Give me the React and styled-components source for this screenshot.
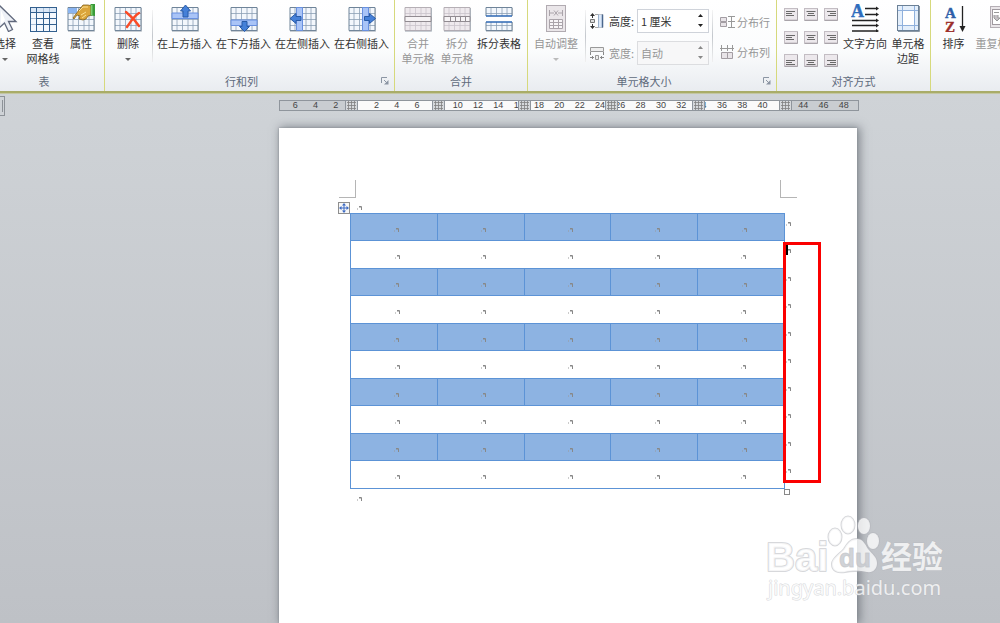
import React from "react"
import styled, { createGlobalStyle, css } from "styled-components"

const GlobalStyle = createGlobalStyle`
  * {
    box-sizing: border-box;
  }

  body {
    margin: 0;
    overflow: hidden;
    font-family: "Noto Sans CJK SC", "Liberation Sans", sans-serif;
    font-size: 11px;
    line-height: 15px;
    color: #333;
  }

  button, input {
    font: inherit;
    color: inherit;
    border: 0;
    padding: 0;
    margin: 0;
    background: none;
  }
`

const Window = styled.div`
  display: flex;
  flex-direction: column;
  height: 100vh;
  overflow: hidden;
`

/* ---------- ribbon ---------- */

const Ribbon = styled.header`
  display: flex;
  flex: none;
  height: 93px;
  overflow: hidden;
  background: linear-gradient(#ffffff, #fbfcfd 55%, #e9ecf0);
  border-bottom: 2px solid #a9ac68;
  box-shadow: 0 1px 0 #c3c6a2;
  z-index: 1;
`

const GroupBox = styled.section`
  display: flex;
  flex-direction: column;
  flex: ${(props) => (props.$last ? "1 0 auto" : "none")};
  width: ${(props) => props.$width || "auto"};
  margin-left: ${(props) => (props.$cut ? "-16px" : "0")};
  border-right: ${(props) => (props.$last ? "0" : "1px solid #d6d97c")};
`

const GroupBody = styled.div`
  display: flex;
  flex: 1;
  padding: 0 2px;
`

const GroupFooter = styled.div`
  display: flex;
  align-items: center;
  height: 20px;
  color: #5f6b7c;
`

const GroupTitle = styled.span`
  flex: 1;
  text-align: center;
`

const Launcher = styled.button`
  width: 16px;
  height: 12px;

  svg {
    display: block;
    margin-left: 3px;
  }
`

const Tool = styled.button`
  display: flex;
  flex-direction: column;
  align-items: center;
  flex: none;
  width: ${(props) => props.$width};
  padding-top: 4px;
  white-space: nowrap;
  color: ${(props) => (props.disabled ? "#969696" : "#333")};

  svg {
    flex: none;
  }
`

const ToolLabel = styled.span`
  margin-top: 4px;
  white-space: pre-line;
`

const Arrow = styled.i`
  width: 0;
  margin-top: 7px;
  border: 3px solid transparent;
  border-bottom: 0;
  border-top-color: ${(props) => (props.$off ? "#bbb" : "#666")};
`

const Divider = styled.i`
  flex: none;
  width: 1px;
  height: 52px;
  margin: 10px 2px 0 3px;
  background: linear-gradient(#f4f4f4, #c4c8cd 50%, #f0f0f0);
`

const Fields = styled.div`
  display: flex;
  flex-direction: column;
  gap: 8px;
  padding: 9px 0 0 2px;
`

const Field = styled.div`
  display: flex;
  align-items: center;
  height: 24px;
  color: ${(props) => (props.$off ? "#969696" : "#333")};

  label {
    width: 28px;
    margin-left: 5px;
  }
`

const Spin = styled.div`
  display: flex;
  align-items: center;
  width: 72px;
  height: 24px;
  border: 1px solid ${(props) => (props.$off ? "#dcdde0" : "#cfd3da")};
  background: ${(props) => (props.$off ? "#f7f7f8" : "#fff")};

  input {
    width: 54px;
    padding-left: 3px;
    outline: 0;
  }
`

const Steps = styled.div`
  display: flex;
  flex-direction: column;
  gap: 4px;
  width: 16px;
`

const Step = styled.button`
  display: flex;
  justify-content: center;
  height: 6px;
  padding-top: 1px;
`

const SmallTools = styled.div`
  display: flex;
  flex-direction: column;
  gap: 6px;
  padding: 10px 0 0 5px;
`

const SmallTool = styled.button`
  display: flex;
  align-items: center;
  gap: 2px;
  height: 24px;
  white-space: nowrap;
  color: #969696;
`

const AlignGrid = styled.div`
  display: grid;
  grid-template-columns: repeat(3, 14px);
  grid-auto-rows: 13px;
  gap: 10px 6px;
  padding: 8px 4px 0 5px;
`

const AlignButton = styled.button`
  display: block;

  svg {
    display: block;
  }
`

/* ---------- document ---------- */

const Workspace = styled.main`
  position: relative;
  display: flex;
  flex-direction: column;
  flex: 1;
  min-height: 0;
  background: linear-gradient(#cfd3d7, #bec1c6);
`

const RulerRow = styled.div`
  display: flex;
  flex: none;
  height: 35px;
`

const TabStop = styled.button`
  width: 5px;
  height: 20px;
  margin: 3px 274px 0 0;
  border: 1px solid #8d9298;
  border-left: 0;
  padding: 3px 1px 3px 0;

  i {
    display: block;
    height: 100%;
    border-right: 1px solid #8d9298;
  }
`

const Ruler = styled.div`
  position: relative;
  display: grid;
  grid-template-columns: repeat(28, minmax(0, 1fr));
  width: 580px;
  height: 11px;
  margin-top: 7px;
  padding: 0 4px 0 5px;
  border: 1px solid #8f959c;
  background: linear-gradient(to right, #c9cdd1 77px, #fafafa 77px, #fafafa 500px, #c9cdd1 500px);
  font-family: "Liberation Sans", sans-serif;
  font-size: 9px;
  line-height: 9px;
  text-align: center;
  color: #444;
`

const Marker = styled.i`
  position: absolute;
  top: 0;
  width: 13px;
  height: 9px;
  border: solid #8f959c;
  border-width: 0 1px;
  background: #d6d9dc;

  svg {
    display: block;
    margin-left: 1px;
  }
`

const Sheet = styled.article`
  flex: 1;
  width: 578px;
  margin-left: 279px;
  padding: 52px 60px 0;
  background: #fff;
  box-shadow: 0 0 2px #868b92, 2px 0 9px 1px rgba(80, 86, 95, 0.6);
`

const Corners = styled.div`
  display: flex;
  justify-content: space-between;
`

const Corner = styled.i`
  width: 17px;
  height: 18px;
  border-bottom: 1px solid #b5b5b5;
  ${(props) =>
    props.$right
      ? css`border-left: 1px solid #b5b5b5;`
      : css`border-right: 1px solid #b5b5b5;`}
`

const Line = styled.div`
  display: flex;
  align-items: center;
  gap: 7px;
  height: 11px;
  margin-top: 4px;
  margin-left: -1px;
`

const TableWrap = styled.div`
  position: relative;
  width: 447px;
  margin-left: 11px;
`

const Table = styled.table`
  width: 447px;
  table-layout: fixed;
  border-collapse: collapse;
`

const Row = styled.tr`
  height: ${(props) => (props.$blue ? "27px" : "28px")};
`

const Cell = styled.td`
  padding: 4px 0 0 6px;
  line-height: 0;
  text-align: center;
  border: solid #5c93d6;
  border-width: ${(props) => (props.$blue ? "1px" : "1px 0")};
  background: ${(props) => (props.$blue ? "#8db3e2" : "#fff")};

  &:first-child {
    border-left-width: 1px;
  }

  &:nth-child(5) {
    border-right-width: 1px;
  }
`

const EndCell = styled.td`
  width: 12px;
  padding: 0 0 8px 1px;
  line-height: 0;
`

const Caret = styled.i`
  position: absolute;
  left: 436px;
  top: 31px;
  width: 2px;
  height: 11px;
  background: #000;
`

const RedBox = styled.i`
  position: absolute;
  left: 433px;
  top: 29px;
  width: 38px;
  height: 241px;
  border: 3px solid #fb0000;
`

const SizeHandle = styled.i`
  position: absolute;
  left: 434px;
  top: 276px;
  width: 6px;
  height: 6px;
  border: 1px solid #888;
  background: #fff;
`

const AfterTable = styled.div`
  margin: 7px 0 0 18px;
  line-height: 0;
`

const Watermark = styled.svg`
  position: absolute;
  right: 50px;
  bottom: 18px;
  width: 190px;
  height: 94px;
  pointer-events: none;
`

/* ---------- icons ---------- */

function Mark() {
  return (
    <svg width="5" height="4" viewBox="0 0 5 4">
      <path d="M0 2.500h1v1H0z" fill="#999" />
      <path d="M2 .5h2.500V4M2.500 1.500h1" fill="none" stroke="#888" />
    </svg>
  )
}

const TOP = [9.5, 15.5, 21.5]
const LEFT = [6, 11.5, 17, 22]

function Grid({ children, off, line = "#8ba0b5", fill = "#f3f7fc" }) {
  const stroke = off ? "#c9c3ca" : line
  return (
    <svg width="28" height="28" viewBox="0 0 28 28">
      <rect x="1" y="3.5" width="26" height="23" fill={off ? "#eee9ed" : fill} />
      <g stroke={stroke} strokeWidth=".8">
        {TOP.map((y) => <path key={y} d={`M1 ${y}h26`} />)}
        {LEFT.map((x) => <path key={x} d={`M${x} 3.5v23`} />)}
      </g>
      <path d="M1 3.5h26v23H1z" fill="none" stroke={off ? "#b5afb5" : "#6f8499"} />
      <path d="M1 27.3h26.5V4" fill="none" stroke="#8e99a5" opacity=".6" />
      {children}
    </svg>
  )
}

const SelectIcon = () => (
  <svg width="28" height="28" viewBox="0 0 28 28">
    <path d="M8 1v23l5.500-5 4 8.500 4-2-4-8h7.500z" fill="#eef1f7" stroke="#60687c" strokeWidth="1.300" />
    <path d="M10 6v14l4-4z" fill="#fff" />
  </svg>
)

const ViewGridIcon = () => (
  <svg width="28" height="28" viewBox="0 0 28 28">
    <rect x="1.500" y="3.500" width="26" height="24" fill="#f4f8fd" stroke="#33608f" />
    <path d="M2 4h25v4H2z" fill="#dbe8f7" />
    <path d="M1 8.500h26M7.500 4v23M14.500 8.500v18.500M20.500 8.500v18.500M8 14.500h19M8 20.500h19" stroke="#33608f" fill="none" />
    <path d="M14.500 4v4M20.500 4v4M2 14.500h5M2 20.500h5" stroke="#a9bed6" />
  </svg>
)

const PropertyIcon = () => (
  <Grid>
    <path d="M1 4h9v5H1z" fill="#8ab4f0" />
    <path d="M6 14l6-8 4-5h5l4 1v9l-4 1-2 3-3 1-4-1 1-3-3-1-3 4z" fill="#dba53b" stroke="#82601c" strokeWidth=".8" />
    <path d="M12 7l4-4 5 0M14 11l5-3M15 14l4-3" stroke="#fbe093" fill="none" />
    <path d="M23.500 0H28v12l-4.500-.5z" fill="#399b39" />
    <path d="M24 1h1.500v10H24z" fill="#7bcf6f" />
  </Grid>
)

const DeleteIcon = () => (
  <Grid>
    <path d="M12 8c5 4 9 8 13 14M25 9c-5 3-8 8-12 14" stroke="#fa4b26" strokeWidth="2.400" strokeLinecap="round" fill="none" />
  </Grid>
)

const InsertTopIcon = () => (
  <Grid>
    <path d="M1 9h26v5.500H1z" fill="#a9c4f7" stroke="#6890e0" />
    <path d="M14.500 1l5 6H17v6h-5V7H9.500z" fill="#4580d8" stroke="#285ba8" />
  </Grid>
)

const InsertBottomIcon = () => (
  <Grid>
    <path d="M1 16h26v5.500H1z" fill="#a9c4f7" stroke="#6890e0" />
    <path d="M14.500 27.500l-5-5H12v-5h5v5h2.500z" fill="#4580d8" stroke="#285ba8" />
  </Grid>
)

const InsertLeftIcon = () => (
  <Grid>
    <path d="M7.500 3.500h6v23h-6z" fill="#a9c4f7" stroke="#6890e0" />
    <path d="M1 14.500l6-5v3h5v4H7v3z" fill="#4580d8" stroke="#285ba8" />
  </Grid>
)

const InsertRightIcon = () => (
  <Grid>
    <path d="M14.500 3.500h6v23h-6z" fill="#a9c4f7" stroke="#6890e0" />
    <path d="M27.500 14.500l-6-5v3h-5v4h5v3z" fill="#4580d8" stroke="#285ba8" />
  </Grid>
)

const MergeIcon = () => (
  <Grid off>
    <path d="M1 12.500h26v5H1z" fill="#f6f3f5" stroke="#918b91" />
  </Grid>
)

const SplitIcon = () => (
  <Grid off>
    <path d="M1 12.500h26v5H1zM7.500 12.500v5M12.500 12.500v5M17.500 12.500v5M22.500 12.500v5" fill="#f6f3f5" stroke="#918b91" />
  </Grid>
)

const SplitTableIcon = () => (
  <Grid>
    <path d="M0 12h28v6H0z" fill="#fff" />
    <path d="M1 12h26M1 18h26" stroke="#2e68b4" strokeWidth="1.500" />
  </Grid>
)

const AutoFitIcon = () => (
  <svg width="28" height="28" viewBox="0 0 28 28">
    <rect x="4.500" y="1.500" width="19" height="26" fill="#eae6e9" stroke="#b1abb1" />
    <path d="M7.500 6v6M20.500 6v6M8 9h4M16 9h4M12 6.500l4 5M16 6.500l-4 5" stroke="#aaa4aa" fill="none" />
    <path d="M7.500 15.500h13v9h-13zM7.500 18.500h13M7.500 21.500h13M11.500 15.500v9M16.500 15.500v9" stroke="#aaa4aa" fill="#f8f6f8" />
  </svg>
)

const HeightIcon = () => (
  <svg width="14" height="16" viewBox="0 0 14 16">
    <path d="M0 3l2.500-3L5 3zM0 13l2.500 3L5 13z" fill="#333" />
    <path d="M2.500 2v3M2.500 11v3" stroke="#333" />
    <path d="M.5 6.500h4v3h-4z" fill="#ddd" stroke="#777" />
    <path d="M5.500 1.500h8M5.500 14.500h8" stroke="#555" strokeDasharray="1 1" />
    <path d="M8.500 1.500h4v13h-4z" fill="#dce9fa" />
    <path d="M8.500 1.500v13" stroke="#9ab0cc" />
    <path d="M12.500 1.500v13" stroke="#4a668c" strokeWidth="1.500" />
  </svg>
)

const WidthIcon = () => (
  <svg width="14" height="14" viewBox="0 0 14 14">
    <path d="M.5 1.500h13v4H.5z" fill="#eee" stroke="#999" />
    <path d="M.5 6v3M13.500 6v3M0 11.500h4M10 11.500h4M2.500 10v3M11.500 10v3" stroke="#888" />
    <path d="M5.500 9.500h3v4h-3z" fill="#eee" stroke="#999" />
  </svg>
)

const RowsIcon = () => (
  <svg width="15" height="14" viewBox="0 0 15 14">
    <path d="M.5 2.500h6v4h-6zM.5 7.500h6v4h-6z" fill="#e8e4e8" stroke="#a39da3" />
    <path d="M8 1.500h7M8 6.500h7M8 12.500h7M11.500 1v12" stroke="#999" />
  </svg>
)

const ColsIcon = () => (
  <svg width="15" height="14" viewBox="0 0 15 14">
    <path d="M1.500 7.500h6v6h-6zM7.500 7.500h5v6h-5z" fill="#e8e4e8" stroke="#a39da3" />
    <path d="M1.500 0v6M7.500 0v6M12.500 0v6M0 3.500h14" stroke="#999" />
  </svg>
)

const TextDirIcon = () => (
  <svg width="28" height="28" viewBox="0 0 28 28">
    <text x="0" y="13" fontFamily="Liberation Serif, serif" fontWeight="bold" fontSize="18" fill="#2e6dbd" stroke="#2e6dbd" strokeWidth=".4">A</text>
    <path d="M14 4.500h12M14 10.500h12M1 16.500h25M1 21.500h25M1 27h25" stroke="#222" strokeWidth="1.300" />
    <path d="M25 2.500l3 2-3 2zM25 8.500l3 2-3 2zM25 14.500l3 2-3 2zM25 19.500l3 2-3 2zM25 25l3 2-3 2z" fill="#222" />
  </svg>
)

const CellMarginIcon = () => (
  <svg width="28" height="28" viewBox="0 0 28 28">
    <rect x="3.500" y="1.500" width="21" height="25" fill="#e4effb" stroke="#6b8096" />
    <path d="M9 7h11v14H9z" fill="#fff" />
    <path d="M8.500 2v24M20.500 2v24M4 6.500h20M4 21.500h20" stroke="#8fb0dc" />
    <path d="M4 27.500h21.500V2" stroke="#8c99a6" fill="none" />
  </svg>
)

const SortIcon = () => (
  <svg width="28" height="28" viewBox="0 0 28 28">
    <text x="5" y="14" fontFamily="Liberation Serif, serif" fontWeight="bold" fontSize="15" fill="#2e5fa8" stroke="#2e5fa8" strokeWidth=".4">A</text>
    <text x="5" y="28" fontFamily="Liberation Serif, serif" fontWeight="bold" fontSize="15" fill="#9c2f2b" stroke="#9c2f2b" strokeWidth=".4">Z</text>
    <path d="M22.500 2v22" stroke="#222" strokeWidth="1.300" />
    <path d="M19.500 22h6l-3 6z" fill="#222" />
  </svg>
)

const RepeatIcon = () => (
  <svg width="28" height="28" viewBox="0 0 28 28">
    <rect x="1.500" y="2.500" width="25" height="21" fill="#eae6e9" stroke="#b5afb5" />
    <rect x="3.500" y="5.500" width="8" height="15" fill="#fff" stroke="#a09aa0" />
    <path d="M5 8.500h5M5 11v3l3 3 3-3h-2v-3" fill="#c5c0c5" stroke="#999" />
    <path d="M12 3v25" stroke="#b5afb5" />
  </svg>
)

const widths = [9, 6, 8]

function AlignIcon({ col, row }) {
  const y = [3.5, 4.5, 6.5][row]
  const w = [...widths]
  if (row === 2) w[2] = 9
  return (
    <svg width="14" height="13" viewBox="0 0 14 13">
      <rect x=".5" y=".5" width="13" height="11.500" fill="#ece8ec" stroke="#c3bdc3" />
      <path d="M.5 12.500h13V1" fill="none" stroke="#a9a4aa" />
      {w.map((n, i) => {
        const x = col === 0 ? 2 : col === 1 ? 7 - n / 2 : 12 - n
        return <path key={i} d={`M${x} ${y + i * 2}h${n}`} stroke="#6a6a6a" strokeWidth="1" />
      })}
    </svg>
  )
}

const HashIcon = () => (
  <svg width="9" height="9" viewBox="0 0 9 9">
    <path d="M0 1.500h9M0 4.500h9M0 7.500h9M1.500 0v9M4.500 0v9M7.500 0v9" stroke="#808080" strokeWidth=".8" />
  </svg>
)

const MoveIcon = () => (
  <svg width="12" height="12" viewBox="0 0 12 12">
    <rect x=".5" y=".5" width="11" height="11" fill="#f7f7f7" stroke="#8e8e8e" />
    <path d="M6 2.500v7M2.500 6h7" stroke="#3c6bc4" />
    <path d="M6 1l2 2.500H4zM6 11L4 8.500h4zM1 6l2.500-2v4zM11 6L8.500 4v4z" fill="#3c6bc4" />
  </svg>
)

const LauncherIcon = () => (
  <svg width="8" height="8" viewBox="0 0 8 8">
    <path d="M.5 6V.5H6" fill="none" stroke="#8b95a3" />
    <path d="M3 3l3 3" stroke="#8b95a3" />
    <path d="M7.500 3v4.500H3z" fill="#8b95a3" />
  </svg>
)

/* ---------- parts ---------- */

function Group({ title, launcher, children, ...rest }) {
  return (
    <GroupBox {...rest}>
      <GroupBody>{children}</GroupBody>
      <GroupFooter>
        <GroupTitle>{title}</GroupTitle>
        {launcher && (
          <Launcher aria-label={title}>
            <LauncherIcon />
          </Launcher>
        )}
      </GroupFooter>
    </GroupBox>
  )
}

function ToolButton({ icon, label, width, menu, disabled }) {
  return (
    <Tool $width={width} disabled={disabled}>
      {icon}
      <ToolLabel>{label}</ToolLabel>
      {menu && <Arrow $off={disabled} />}
    </Tool>
  )
}

function SizeField({ id, icon, label, value, off }) {
  const color = off ? "#888" : "#222"
  return (
    <Field $off={off}>
      {icon}
      <label htmlFor={id}>{label}</label>
      <Spin $off={off}>
        <input id={id} type="text" defaultValue={value} disabled={off} />
        <Steps>
          <Step disabled={off} aria-label={label + "+"}>
            <svg width="5" height="3"><path d="M0 3L2.500 0 5 3z" fill={color} /></svg>
          </Step>
          <Step disabled={off} aria-label={label + "-"}>
            <svg width="5" height="3"><path d="M0 0h5L2.500 3z" fill={color} /></svg>
          </Step>
        </Steps>
      </Spin>
    </Field>
  )
}

const rulerNumbers = [6, 4, 2, ""]
for (let n = 2; n <= 48; n += 2) rulerNumbers.push(n === 8 || n === 42 ? "" : n)

const markers = [65, 152, 238, 325, 412, 499]
const rows = Array.from({ length: 10 }, (_, i) => i)
const cols = [0, 1, 2, 3, 4]

function App() {
  return (
    <>
      <GlobalStyle />
      <Window>
        <Ribbon>
          <Group title="表" $width="121px" $cut>
            <ToolButton icon={<SelectIcon />} label="选择" width="38px" menu />
            <ToolButton icon={<ViewGridIcon />} label={"查看\n网格线"} width="38px" />
            <ToolButton icon={<PropertyIcon />} label="属性" width="38px" />
          </Group>

          <Group title="行和列" $width="290px" launcher>
            <ToolButton icon={<DeleteIcon />} label="删除" width="42px" menu />
            <Divider />
            <ToolButton icon={<InsertTopIcon />} label="在上方插入" width="59px" />
            <ToolButton icon={<InsertBottomIcon />} label="在下方插入" width="59px" />
            <ToolButton icon={<InsertLeftIcon />} label="在左侧插入" width="59px" />
            <ToolButton icon={<InsertRightIcon />} label="在右侧插入" width="59px" />
          </Group>

          <Group title="合并" $width="133px">
            <ToolButton icon={<MergeIcon />} label={"合并\n单元格"} width="42px" disabled />
            <ToolButton icon={<SplitIcon />} label={"拆分\n单元格"} width="36px" disabled />
            <ToolButton icon={<SplitTableIcon />} label="拆分表格" width="48px" />
          </Group>

          <Group title="单元格大小" $width="249px" launcher>
            <ToolButton icon={<AutoFitIcon />} label="自动调整" width="52px" menu disabled />
            <Divider />
            <Fields>
              <SizeField id="row-height" icon={<HeightIcon />} label="高度:" value="1 厘米" />
              <SizeField id="col-width" icon={<WidthIcon />} label="宽度:" value="自动" off />
            </Fields>
            <Divider />
            <SmallTools>
              <SmallTool disabled><RowsIcon />分布行</SmallTool>
              <SmallTool disabled><ColsIcon />分布列</SmallTool>
            </SmallTools>
          </Group>

          <Group title="对齐方式" $width="154px">
            <AlignGrid>
              {[0, 1, 2].map((row) =>
                [0, 1, 2].map((col) => (
                  <AlignButton key={`${row}${col}`} aria-label="对齐方式">
                    <AlignIcon row={row} col={col} />
                  </AlignButton>
                ))
              )}
            </AlignGrid>
            <ToolButton icon={<TextDirIcon />} label="文字方向" width="46px" />
            <ToolButton icon={<CellMarginIcon />} label={"单元格\n边距"} width="40px" />
          </Group>

          <Group $last>
            <ToolButton icon={<SortIcon />} label="排序" width="41px" />
            <ToolButton icon={<RepeatIcon />} label="重复标题行" width="58px" disabled />
          </Group>
        </Ribbon>

        <Workspace>
          <RulerRow>
            <TabStop aria-label="制表符"><i /></TabStop>
            <Ruler>
              {rulerNumbers.map((n, i) => <span key={i}>{n}</span>)}
              {markers.map((x) => (
                <Marker key={x} style={{ left: x }}><HashIcon /></Marker>
              ))}
            </Ruler>
          </RulerRow>

          <Sheet>
            <Corners>
              <Corner />
              <Corner $right />
            </Corners>
            <Line>
              <MoveIcon />
              <Mark />
            </Line>
            <TableWrap>
              <Table>
                <colgroup>
                  {cols.map((c) => <col key={c} />)}
                  <col width="12" />
                </colgroup>
                <tbody>
                  {rows.map((r) => (
                    <Row key={r} $blue={r % 2 === 0}>
                      {cols.map((c) => (
                        <Cell key={c} $blue={r % 2 === 0}><Mark /></Cell>
                      ))}
                      <EndCell><Mark /></EndCell>
                    </Row>
                  ))}
                </tbody>
              </Table>
              <Caret />
              <RedBox />
              <SizeHandle />
            </TableWrap>
            <AfterTable><Mark /></AfterTable>
          </Sheet>

          <Watermark viewBox="0 0 190 94">
            <g fill="#fff" fillOpacity=".75" stroke="#b4b7bc" strokeOpacity=".55" strokeWidth="2" paintOrder="stroke" strokeLinejoin="round">
              <text x="6" y="60" fontFamily="Liberation Sans, sans-serif" fontWeight="bold" fontSize="40">Bai</text>
              <ellipse cx="75" cy="26" rx="6.500" ry="8.500" />
              <ellipse cx="88" cy="14" rx="6.500" ry="8.500" />
              <ellipse cx="104" cy="15" rx="6" ry="8" />
              <ellipse cx="113" cy="30" rx="6" ry="8" />
              <path d="M97 28c-7 0-10 5-13 10-4 5-12 9-12 15 0 8 7 9 13 8 8-2 16-1 22 0 6 1 10-3 10-9 0-6-5-9-9-14-3-5-5-10-11-10z" />
              <text x="79" y="56" fontFamily="Liberation Sans, sans-serif" fontSize="26" fill="#c2c5ca" fontWeight="bold" strokeWidth="1">du</text>
              <text x="121" y="57" fontFamily="Noto Sans CJK SC, sans-serif" fontWeight="bold" fontSize="31" strokeWidth="1">经验</text>
              <text x="8" y="84" fontFamily="Noto Sans, sans-serif" fontSize="20" strokeWidth="1">jingyan.baidu.com</text>
            </g>
          </Watermark>
        </Workspace>
      </Window>
    </>
  )
}

export default App
